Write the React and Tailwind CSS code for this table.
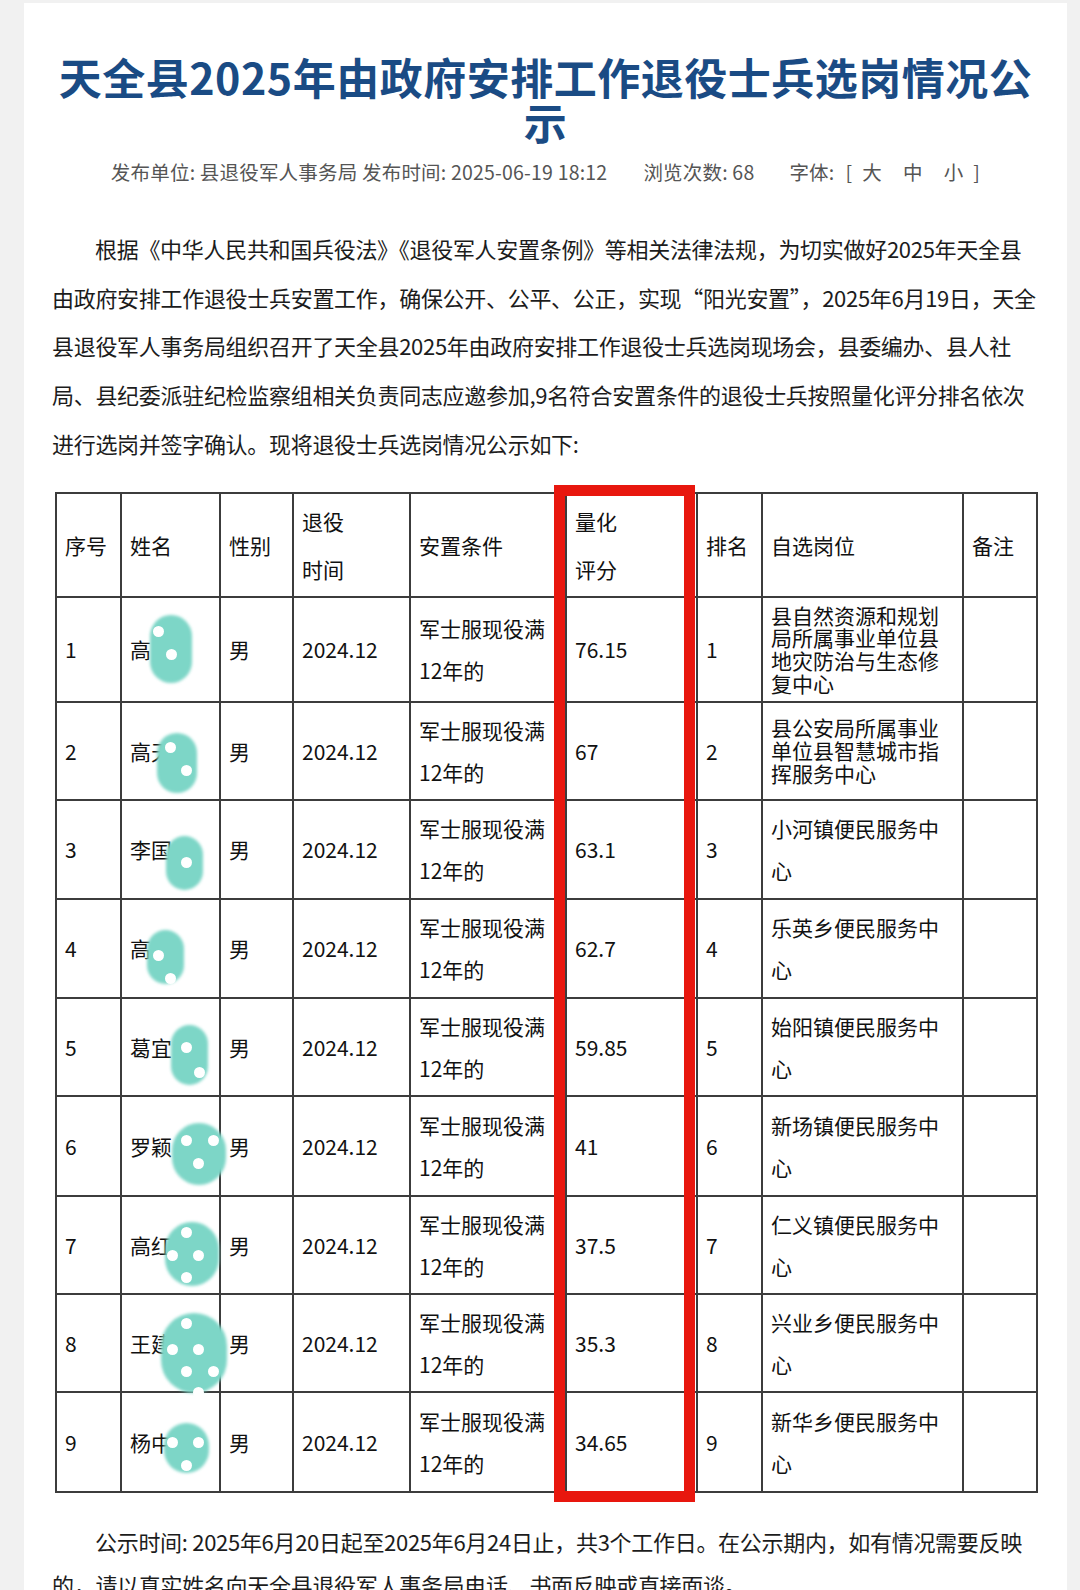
import React from 'react'

const FONT = "'Noto Sans CJK SC', 'Noto Sans', sans-serif"

const rows = [
  { no: '1', name: '高', score: '76.15', post: '县自然资源和规划局所属事业单位县地灾防治与生态修复中心', tight: true, h: 'h-[105px]' },
  { no: '2', name: '高天', score: '67', post: '县公安局所属事业单位县智慧城市指挥服务中心', tight: true, h: 'h-[98px]' },
  { no: '3', name: '李国', score: '63.1', post: '小河镇便民服务中心', h: 'h-[99px]' },
  { no: '4', name: '高', score: '62.7', post: '乐英乡便民服务中心', h: 'h-[99px]' },
  { no: '5', name: '葛宜', score: '59.85', post: '始阳镇便民服务中心', h: 'h-[98px]' },
  { no: '6', name: '罗颖', score: '41', post: '新场镇便民服务中心', h: 'h-[100px]' },
  { no: '7', name: '高红', score: '37.5', post: '仁义镇便民服务中心', h: 'h-[98px]' },
  { no: '8', name: '王建', score: '35.3', post: '兴业乡便民服务中心', h: 'h-[98px]' },
  { no: '9', name: '杨中', score: '34.65', post: '新华乡便民服务中心', h: 'h-[100px]' },
]

// mosaic stickers covering names (page coordinates)
const blobs = [
  { x: 150, y: 615, w: 42, h: 68, dots: [[158, 631], [171, 654]] },
  { x: 157, y: 733, w: 40, h: 60, dots: [[170, 747], [186, 770]] },
  { x: 166, y: 836, w: 37, h: 54, dots: [[186, 862]] },
  { x: 147, y: 930, w: 37, h: 54, dots: [[158, 955], [170, 978]] },
  { x: 171, y: 1025, w: 37, h: 60, dots: [[186, 1047], [199, 1072]] },
  { x: 172, y: 1123, w: 54, h: 62, dots: [[186, 1140], [213, 1140], [198, 1163]] },
  { x: 165, y: 1222, w: 54, h: 64, dots: [[186, 1232], [172, 1255], [198, 1255], [186, 1277]] },
  { x: 161, y: 1313, w: 66, h: 80, dots: [[186, 1323], [172, 1349], [198, 1349], [186, 1371], [213, 1371], [198, 1392]] },
  { x: 164, y: 1423, w: 45, h: 50, dots: [[172, 1442], [198, 1442], [186, 1465]] },
]

const cell = 'border-2 border-[#3c3c3c] px-[8px] align-middle text-left'

const Blob = ({ b }) => (
  <>
    <div
      className="absolute rounded-full bg-[#7dd6c7] blur-[1.5px]"
      style={{ left: b.x, top: b.y, width: b.w, height: b.h }}
    />
    {b.dots.map(([x, y], i) => (
      <div
        key={i}
        className="absolute w-[11px] h-[11px] rounded-full bg-white blur-[0.5px]"
        style={{ left: x - 5.5, top: y - 5.5 }}
      />
    ))}
  </>
)

const App = () => {
  return (
    <div className="relative w-[1080px] h-[1590px] overflow-hidden bg-[#f1f1f1]" style={{ fontFamily: FONT }}>
      <div className="ml-[24px] mt-[3px] w-[1043px] h-[1587px] bg-white">
        <h1 className="pt-[51px] text-center text-[43px] leading-[45px] tracking-[0.5px] font-bold text-[#1a4b84]">
          天全县2025年由政府安排工作退役士兵选岗情况公
          <br />
          示
        </h1>

        <div className="mt-[16px] flex justify-center text-[19.5px] leading-[24px] tracking-[0.2px] text-[#555]">
          <span>发布单位: 县退役军人事务局 发布时间: 2025-06-19 18:12</span>
          <span className="ml-[36px]">浏览次数: 68</span>
          <span className="ml-[35px]">字体:</span>
          <span className="ml-[11px]">[</span>
          <span className="ml-[10px]">大</span>
          <span className="ml-[21px]">中</span>
          <span className="ml-[21px]">小</span>
          <span className="ml-[10px]">]</span>
        </div>

        <div className="mt-[40px] px-[28px] text-[22px] leading-[48.7px] tracking-[-0.3px] text-[#1c1c1c] whitespace-nowrap">
          <div className="pl-[43px]">根据《中华人民共和国兵役法》《退役军人安置条例》等相关法律法规，为切实做好2025年天全县</div>
          <div>由政府安排工作退役士兵安置工作，确保公开、公平、公正，实现“阳光安置”，2025年6月19日，天全</div>
          <div>县退役军人事务局组织召开了天全县2025年由政府安排工作退役士兵选岗现场会，县委编办、县人社</div>
          <div>局、县纪委派驻纪检监察组相关负责同志应邀参加,9名符合安置条件的退役士兵按照量化评分排名依次</div>
          <div>进行选岗并签字确认。现将退役士兵选岗情况公示如下:</div>
        </div>

        <div className="relative mt-[24px] ml-[31px] w-[981px]">
          <table className="w-[981px] table-fixed border-collapse text-[21px] text-[#111]">
            <colgroup>
              <col className="w-[65px]" />
              <col className="w-[99px]" />
              <col className="w-[73px]" />
              <col className="w-[117px]" />
              <col className="w-[156px]" />
              <col className="w-[131px]" />
              <col className="w-[65px]" />
              <col className="w-[201px]" />
              <col className="w-[74px]" />
            </colgroup>
            <thead>
              <tr className="h-[104px] leading-[48px]">
                <th className={`${cell} font-normal`}>序号</th>
                <th className={`${cell} font-normal`}>姓名</th>
                <th className={`${cell} font-normal`}>性别</th>
                <th className={`${cell} font-normal`}>退役<br />时间</th>
                <th className={`${cell} font-normal`}>安置条件</th>
                <th className={`${cell} font-normal`}>量化<br />评分</th>
                <th className={`${cell} font-normal`}>排名</th>
                <th className={`${cell} font-normal`}>自选岗位</th>
                <th className={`${cell} font-normal`}>备注</th>
              </tr>
            </thead>
            <tbody>
              {rows.map((r) => (
                <tr key={r.no} className={`${r.h} leading-[42px]`}>
                  <td className={cell}>{r.no}</td>
                  <td className={`${cell} whitespace-nowrap`}>{r.name}</td>
                  <td className={cell}>男</td>
                  <td className={cell}>2024.12</td>
                  <td className={cell}>军士服现役满12年的</td>
                  <td className={cell}>{r.score}</td>
                  <td className={cell}>{r.no}</td>
                  <td className={`${cell} ${r.tight ? 'leading-[22.7px]' : ''}`}>{r.post}</td>
                  <td className={cell}></td>
                </tr>
              ))}
            </tbody>
          </table>
          <div className="absolute left-[499px] top-[-7px] w-[141px] h-[1017px] border-[11px] border-[#e8170e]" />
        </div>

        <div className="mt-[27px] px-[28px] text-[22px] leading-[43px] tracking-[-0.3px] text-[#1c1c1c] whitespace-nowrap">
          <div className="pl-[43px]">公示时间: 2025年6月20日起至2025年6月24日止，共3个工作日。在公示期内，如有情况需要反映</div>
          <div>的，请以真实姓名向天全县退役军人事务局电话、书面反映或直接面谈。</div>
        </div>
      </div>

      {blobs.map((b, i) => (
        <Blob key={i} b={b} />
      ))}
    </div>
  )
}

export default App
